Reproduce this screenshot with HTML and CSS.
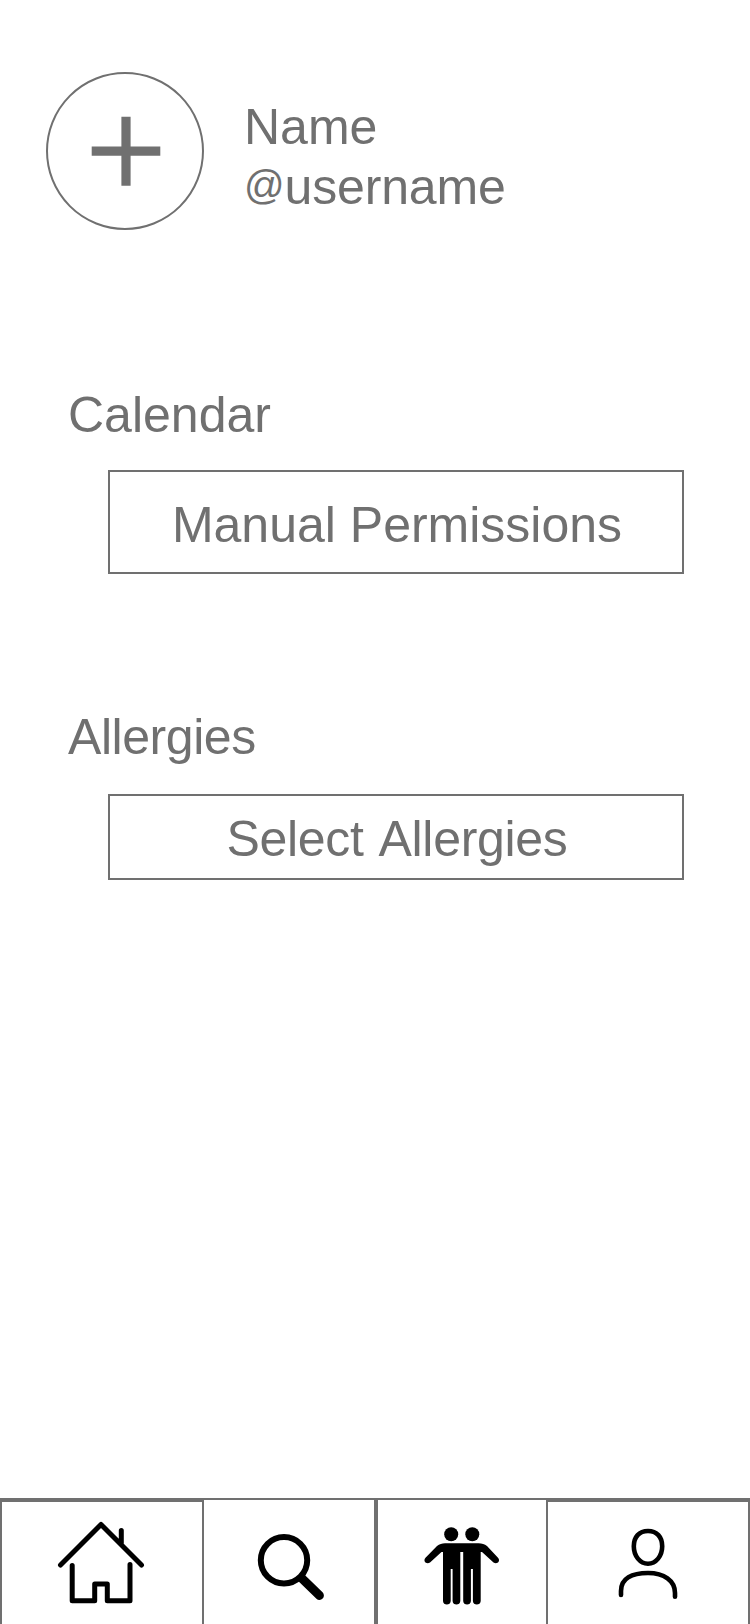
FILE: index.html
```html
<!DOCTYPE html>
<html lang="en">
<head>
<meta charset="utf-8">
<title>Profile</title>
<link rel="stylesheet" href="styles.css">
</head>
<body>
<div class="screen">
  <header class="profile">
    <button class="avatar" aria-label="Add photo">
      <svg width="70" height="70" viewBox="0 0 70 70"><path d="M35 0.7V69.7M0.7 35.2H69.3" fill="none" stroke="#707070" stroke-width="9.2"/></svg>
    </button>
    <div class="identity">
      <div class="name">Name</div>
      <div class="handle"><span class="at">@</span>username</div>
    </div>
  </header>
  <main class="settings">
    <section class="group">
      <h2 class="title">Calendar</h2>
      <button class="option option-permissions">Manual Permissions</button>
    </section>
    <section class="group">
      <h2 class="title title-allergies">Allergies</h2>
      <button class="option option-allergies">Select Allergies</button>
    </section>
  </main>
  <nav class="tabs">
    <a class="tab tab-home" aria-label="Home">
      <svg width="200" height="122" viewBox="2 1502 200 122"><g class="line"><path d="M60.5 1565L101 1524.5L141.500 1565M121.300 1543V1530.500M72.200 1565.500V1600.700H94.700V1584H107.300V1600.700H130V1564.500"/></g></svg>
    </a>
    <a class="tab tab-search" aria-label="Search">
      <svg width="170" height="124" viewBox="204 1500 170 124"><circle cx="284" cy="1560.200" r="23.200" fill="none" stroke="#000" stroke-width="6"/><path d="M302 1578.500L319.500 1595.500" stroke="#000" stroke-width="8.800" stroke-linecap="round"/></svg>
    </a>
    <a class="tab tab-friends" aria-label="Friends">
      <svg width="168" height="124" viewBox="378 1500 168 124"><circle cx="451.200" cy="1534.300" r="7"/><circle cx="472.300" cy="1534.300" r="7"/><path d="M445 1543.200H478.500C482 1543.200 484.500 1544 487 1546L498 1557.800C501 1561 497 1565 493.500 1562.500L482 1552H480.700V1601C480.700 1605.700 472.900 1605.700 472.900 1601V1569H470.900V1601C470.900 1605.700 463.200 1605.700 463.200 1601V1552H460.300V1601C460.300 1605.700 452.600 1605.700 452.600 1601V1569H450.700V1601C450.700 1605.700 443 1605.700 443 1601V1552H441.500L430 1562.500C426.500 1565 422.500 1561 425.500 1557.800L437 1546C439.500 1544 442 1543.200 445 1543.200Z"/></svg>
    </a>
    <a class="tab tab-profile" aria-label="Profile">
      <svg width="200" height="122" viewBox="548 1502 200 122"><g class="line thin"><path d="M648 1531C639.200 1531 633.800 1537 633.800 1546.300C633.800 1556 640 1563.700 648 1563.700C656 1563.700 662.200 1556 662.200 1546.300C662.200 1537 656.800 1531 648 1531ZM621 1595V1591C621 1578.500 632 1573 648 1573C664 1573 675 1580.500 675 1593V1596.800"/></g></svg>
    </a>
  </nav>
</div>
</body>
</html>
```

FILE: styles.css
```css
* {
  box-sizing: border-box;
}

body {
  margin: 0;
  background: #fff;
}

.screen {
  display: flex;
  flex-direction: column;
  width: 750px;
  height: 1624px;
  overflow: hidden;
  color: #707070;
  font: 50px/60px "Liberation Sans", Arial, sans-serif;
}

.profile {
  display: flex;
  gap: 40px;
  height: 230px;
  padding: 72px 46px 0;
}

.avatar {
  display: flex;
  align-items: center;
  justify-content: center;
  width: 158px;
  height: 158px;
  padding: 0 0 0 2px;
  border: 2px solid #707070;
  border-radius: 50%;
  background: #fff;
}

.identity {
  padding-top: 25px;
}

.handle {
  letter-spacing: -0.15px;
}

.at {
  position: relative;
  top: -5px;
  font-size: 40px;
  line-height: 1;
}

.settings {
  flex: 1;
  padding: 155px 66px 0 68px;
}

.group {
  display: flex;
  flex-direction: column;
}

.title {
  margin: 0;
  font-size: inherit;
  font-weight: 400;
}

.title-allergies {
  letter-spacing: -0.45px;
}

.option {
  margin-left: 40px;
  border: 2px solid #707070;
  background: #fff;
  color: inherit;
  font: inherit;
}

.option-permissions {
  height: 104px;
  margin-top: 25px;
  margin-bottom: 133px;
  padding: 6px 0 0 2px;
}

.option-allergies {
  height: 86px;
  margin-top: 27px;
  padding: 3px 0 0 2px;
  letter-spacing: -0.3px;
  word-spacing: 4px;
}

.tabs {
  display: grid;
  grid-template-columns: 204px 172px 170px 204px;
  height: 126px;
  border-top: 2px solid #707070;
}

.tab {
  display: block;
  height: 124px;
  border: 0 solid #707070;
}

.tab svg {
  display: block;
}

.tab-home,
.tab-profile {
  border-width: 2px 2px 0;
}

.tab-search {
  border-right-width: 2px;
}

.tab-friends {
  border-left-width: 2px;
}

.line {
  fill: none;
  stroke: #000;
  stroke-width: 5px;
  stroke-linecap: round;
  stroke-linejoin: round;
}

.thin {
  stroke-width: 4.600px;
}
```
